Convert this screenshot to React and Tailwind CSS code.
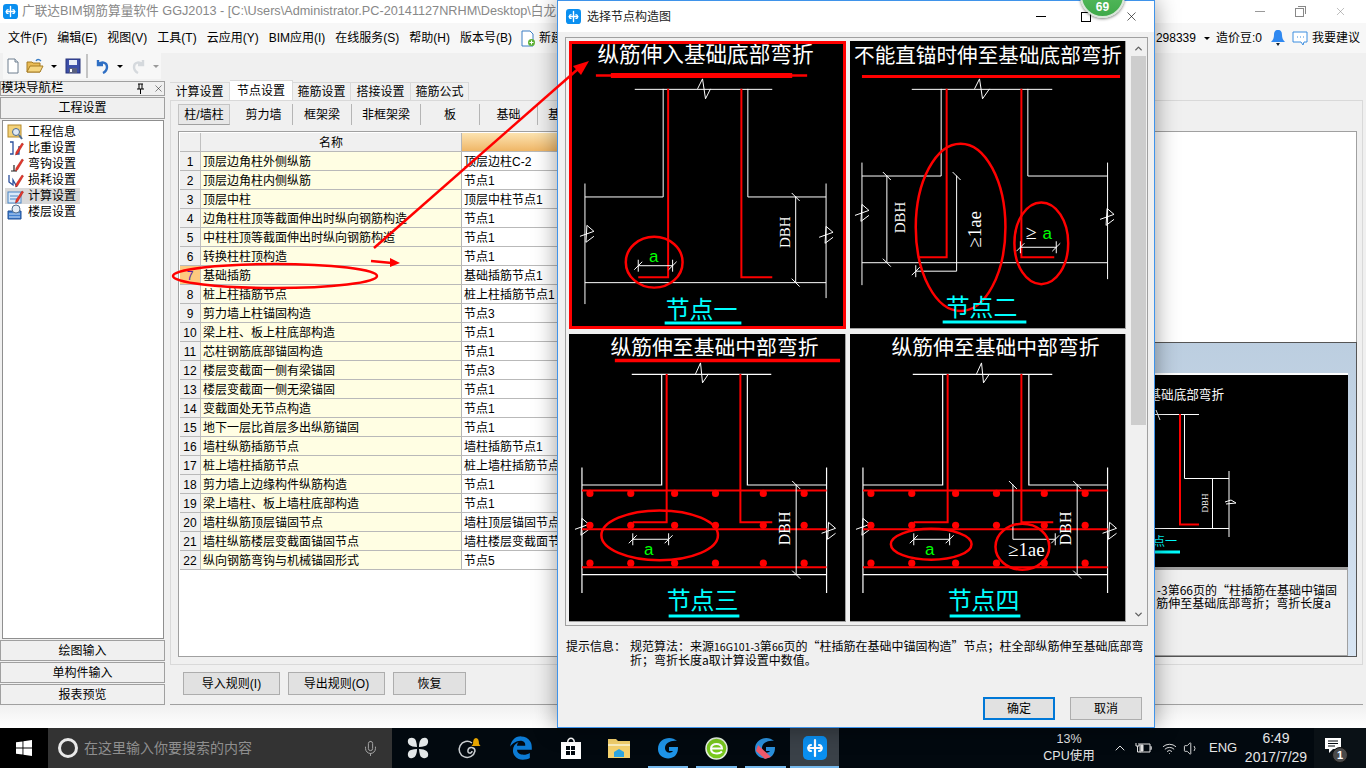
import { ChevronUp, Mic, Volume1, Wifi, X } from 'lucide-react';
import { FaEdgeLegacy } from 'react-icons/fa';

const menus = ['文件(F)', '编辑(E)', '视图(V)', '工具(T)', '云应用(Y)', 'BIM应用(I)', '在线服务(S)', '帮助(H)', '版本号(B)'];

const mainTabs = [
  ['计算设置', 'w-[60px]'],
  ['节点设置', 'w-[63px]'],
  ['箍筋设置', 'w-[58px]'],
  ['搭接设置', 'w-[60px]'],
  ['箍筋公式', 'w-[58px]'],
];

const subTabs = [
  ['剪力墙', 'w-[58px]'],
  ['框架梁', 'w-[59px]'],
  ['非框架梁', 'w-[69px]'],
  ['板', 'w-[59px]'],
  ['基础', 'w-[58px]'],
  ['基础主梁', 'w-[69px]'],
];

const rows = [
  ['顶层边角柱外侧纵筋', '顶层边柱C-2'],
  ['顶层边角柱内侧纵筋', '节点1'],
  ['顶层中柱', '顶层中柱节点1'],
  ['边角柱柱顶等截面伸出时纵向钢筋构造', '节点1'],
  ['中柱柱顶等截面伸出时纵向钢筋构造', '节点1'],
  ['转换柱柱顶构造', '节点1'],
  ['基础插筋', '基础插筋节点1'],
  ['桩上柱插筋节点', '桩上柱插筋节点1'],
  ['剪力墙上柱锚固构造', '节点3'],
  ['梁上柱、板上柱底部构造', '节点1'],
  ['芯柱钢筋底部锚固构造', '节点1'],
  ['楼层变截面一侧有梁锚固', '节点3'],
  ['楼层变截面一侧无梁锚固', '节点1'],
  ['变截面处无节点构造', '节点1'],
  ['地下一层比首层多出纵筋锚固', '节点1'],
  ['墙柱纵筋插筋节点', '墙柱插筋节点1'],
  ['桩上墙柱插筋节点', '桩上墙柱插筋节点1'],
  ['剪力墙上边缘构件纵筋构造', '节点1'],
  ['梁上墙柱、板上墙柱底部构造', '节点1'],
  ['墙柱纵筋顶层锚固节点', '墙柱顶层锚固节点1'],
  ['墙柱纵筋楼层变截面锚固节点', '墙柱楼层变截面节点1'],
  ['纵向钢筋弯钩与机械锚固形式', '节点5'],
];

const navItems = ['工程信息', '比重设置', '弯钩设置', '损耗设置', '计算设置', '楼层设置'];

function AppLogo({ size = 16 }) {
  return (
    <svg width={size} height={size} viewBox="0 0 24 24">
      <rect width="24" height="24" rx="5" fill="#0a8ff0" />
      <path d="M12 4v16M5 12h14M8 9c-3 0-4 6 0 6M16 9c3 0 4 6 0 6" stroke="#fff" strokeWidth="2.2" fill="none" strokeLinecap="round" />
    </svg>
  );
}

function NavIcon({ index }) {
  const pencil = <path d="M9 12 15 3l1.500 1L10.500 14l-2 1z" fill="#e8372c" stroke="#a01c12" strokeWidth=".5" />;
  return (
    <svg width="17" height="16" viewBox="0 0 17 16" className="shrink-0">
      {index === 0 && (
        <>
          <rect x="1" y="1" width="13" height="12" fill="#f3d27a" stroke="#b58a2a" />
          <circle cx="9" cy="8" r="3.5" fill="#dfe9f5" stroke="#4b6a8f" />
          <path d="m12 11 3 4" stroke="#4b6a8f" strokeWidth="2" />
        </>
      )}
      {index === 1 && (
        <>
          <path d="M3 2h3v12H3M12 6v8H9" stroke="#2a4f9c" strokeWidth="1.3" fill="none" />
          {pencil}
        </>
      )}
      {index === 2 && (
        <>
          <path d="M7 9v6M4 15h6" stroke="#222" strokeWidth="1.2" fill="none" />
          {pencil}
        </>
      )}
      {index === 3 && (
        <>
          <path d="M2 3v7l4 3V8l4 7" stroke="#2a4f9c" strokeWidth="1.3" fill="none" />
          {pencil}
        </>
      )}
      {index === 4 && (
        <>
          <rect x="1" y="4" width="13" height="11" fill="#d9e9f9" stroke="#4a86c5" />
          <path d="M3 8h8M3 11h7" stroke="#4a86c5" />
          {pencil}
        </>
      )}
      {index === 5 && (
        <>
          <path d="M1 7h13v8H1z" fill="#3f7fd0" stroke="#1f4f95" />
          <path d="M2 10h11M2 13h11" stroke="#cfe2f7" />
          <circle cx="9" cy="5" r="4" fill="#e5edf6" stroke="#54708f" />
        </>
      )}
    </svg>
  );
}

function ToolbarIcons() {
  return (
    <div className="flex items-center h-[26px] w-[158px] ml-[3px] bg-[#f7f7f7]">
      <svg width="16" height="16" viewBox="0 0 16 16" className="ml-[2px]">
        <path d="M3 1h7l3 3v11H3z" fill="#fff" stroke="#6f7f8f" />
        <path d="M10 1v3h3" fill="#dfe7ef" stroke="#6f7f8f" />
      </svg>
      <svg width="18" height="16" viewBox="0 0 18 16" className="ml-[5px]">
        <path d="M1 4h5l1 1h7v9H1z" fill="#e9bb55" stroke="#a67c25" />
        <path d="M1 14l3-6h13l-3 6z" fill="#f6d680" stroke="#a67c25" />
        <path d="M10 3c1-2 3-2 5 0" stroke="#3b7dc4" fill="none" strokeWidth="1.4" />
      </svg>
      <span className="ml-[7px] w-0 h-0 border-x-[3px] border-x-transparent border-t-[3px] border-t-black" />
      <svg width="16" height="16" viewBox="0 0 16 16" className="ml-[8px]">
        <rect x="1" y="1" width="14" height="14" fill="#3c4fa8" stroke="#26337a" />
        <rect x="4" y="2" width="8" height="5" fill="#e8edf7" />
        <rect x="4" y="10" width="8" height="5" fill="#59607f" />
        <rect x="5" y="11" width="2" height="3" fill="#fff" />
      </svg>
      <span className="ml-[5px] h-[24px] w-[2px] bg-[#c4c4c4]" />
      <svg width="15" height="16" viewBox="0 0 15 16" className="ml-[7px]">
        <path d="M3 2v5h5M3 7c3-4 9-3 9 2 0 3-2 5-4 6" stroke="#2f6fc4" strokeWidth="2.4" fill="none" />
      </svg>
      <span className="ml-[7px] w-0 h-0 border-x-[3px] border-x-transparent border-t-[3px] border-t-black" />
      <svg width="14" height="16" viewBox="0 0 14 16" className="ml-[8px]">
        <path d="M12 2v5H7M12 7C9 3 3 4 3 9c0 3 2 5 4 6" stroke="#d5d9dd" strokeWidth="2.4" fill="none" />
      </svg>
      <span className="ml-[8px] w-0 h-0 border-x-[3px] border-x-transparent border-t-[3px] border-t-[#9a9a9a]" />
    </div>
  );
}

function Ln({ d, w = 1, c = '#fff' }) {
  return <path d={d} stroke={c} strokeWidth={w} fill="none" />;
}

function Tick({ x, y }) {
  return <Ln d={`M${x - 4} ${y - 4}L${x + 4} ${y + 4}`} />;
}

// end mark of a horizontal dimension: upright bar and a slash
function HTick({ x, y }) {
  return <Ln d={`M${x} ${y - 6}V${y + 6}M${x - 4} ${y + 4}L${x + 4} ${y - 4}`} />;
}

function Brk({ x, y }) {
  // little zigzag break mark, x/y is the crossing point
  return <Ln d={`M${x - 7} ${y}L${x + 7} ${y - 5}L${x} ${y - 11}L${x - 1} ${y + 6}L${x + 7} ${y}`} />;
}

function Oval({ cx, cy, rx, ry }) {
  return <ellipse cx={cx} cy={cy} rx={rx} ry={ry} stroke="#ff0000" strokeWidth="2.5" fill="none" />;
}

function Txt({ x, y, size, color = '#fff', children, rotate, serif }) {
  return (
    <text
      x={x}
      y={y}
      fontSize={size}
      fill={color}
      textAnchor="middle"
      dominantBaseline="central"
      transform={rotate ? `rotate(${rotate} ${x} ${y})` : undefined}
      className={serif ? "font-['Liberation_Serif']" : undefined}
    >
      {children}
    </text>
  );
}

function Dots({ x0, y }) {
  return [0, 41, 85, 126, 174, 215].map((dx) => <circle key={dx} cx={x0 + dx} cy={y} r="3.6" fill="#ff0000" />);
}

function Frame({ box, children, selected }) {
  return (
    <div className={`relative bg-black border-b border-r border-[#a0a0a0] ${selected ? 'outline-[3px] -outline-offset-[3px] outline-[#ff0000]' : ''}`}>
      <svg viewBox={box} className="block w-full h-full">
        {children}
      </svg>
    </div>
  );
}

function Node1() {
  return (
    <Frame box="569 40 277 288" selected>
      <Txt x={706} y={54} size={21.7}>纵筋伸入基础底部弯折</Txt>
      <Ln d="M596 74.5H808" w={2.5} c="#f00" />
      <Ln d="M611 74.5H793" w={5} c="#f00" />
      <Ln d="M635 88.5H773M663.5 88V196.5H585M585 183V304M748.5 88V196.5H827M827 183V298M585 282.5H827" />
      <Ln d="M698 88L703 78L706 98L711 88" />
      <Brk x={587} y={236} />
      <Brk x={827} y={237} />
      <Ln d="M668.5 88V277H638.5" w={2} c="#f00" />
      <Ln d="M742 88V277H773" w={2} c="#f00" />
      <Ln d="M796.5 196V282" />
      <Tick x={796.5} y={196.5} />
      <Tick x={796.5} y={282.5} />
      <Txt x={786} y={232} size={15} rotate={-90} serif>DBH</Txt>
      <Ln d="M638.5 265.5H673" />
      <HTick x={638.5} y={265.5} />
      <HTick x={673} y={265.5} />
      <Txt x={654} y={256} size={17} color="#00ff00">a</Txt>
      <Oval cx={654.5} cy={262} rx={28.5} ry={25.5} />
      <Txt x={702} y={309} size={24} color="#00ffff">节点一</Txt>
      <rect x="665" y="321.5" width="77" height="3" fill="#00ffff" />
    </Frame>
  );
}

function Node2() {
  return (
    <Frame box="850 40 276 288">
      <Txt x={988.5} y={55} size={20.7}>不能直锚时伸至基础底部弯折</Txt>
      <Ln d="M862 75.5H1121" w={3} c="#f00" />
      <Ln d="M912 88.5H1053M941.5 88V175.5H862M862 162V285M1028.5 88V175.5H1108.5M1108.5 162V279M862 262.5H1108.5" />
      <Ln d="M975 88L980 78L983 98L990 88" />
      <Brk x={862} y={215} />
      <Brk x={1108} y={219} />
      <Ln d="M947 88V257H918" w={2} c="#f00" />
      <Ln d="M1022 88V257H1055" w={2} c="#f00" />
      <Ln d="M887 175V262M957 175V271H916" />
      <Tick x={887} y={175.5} />
      <Tick x={887} y={262.5} />
      <Tick x={957} y={175.5} />
      <HTick x={916} y={271} />
      <Txt x={900} y={217} size={15} rotate={-90} serif>DBH</Txt>
      <Txt x={975} y={229} size={19} rotate={-90} serif>≥1ae</Txt>
      <Ln d="M1021 247H1057" />
      <HTick x={1021} y={247} />
      <HTick x={1057} y={247} />
      <Txt x={1032} y={232} size={20} serif>≥</Txt>
      <Txt x={1048} y={233} size={17} color="#00ff00">a</Txt>
      <Oval cx={961} cy={227} rx={45} ry={84} />
      <Oval cx={1042} cy={243} rx={27} ry={41} />
      <Txt x={982} y={307} size={24} color="#00ffff">节点二</Txt>
      <rect x="943" y="320.5" width="84" height="3" fill="#00ffff" />
    </Frame>
  );
}

function Foundation({ x0, wallL, wallR, barL, barR, hookL, hookR, xEnd }) {
  // shared part of node 3 and node 4, same drawing shifted along x
  return (
    <>
      <Ln d={`M${x0 + 50} 373.5H${x0 + 190}M${wallL} 373V484.5H${x0}M${x0} 467V593M${wallR} 373V484.5H${xEnd}M${xEnd} 467V593M${x0} 574.5H${xEnd}`} w={1.2} />
      <Ln d={`M${x0 + 114} 373L${x0 + 119} 362L${x0 + 121} 382L${x0 + 127} 373`} />
      <Brk x={x0} y={529} />
      <Brk x={xEnd + 2} y={533} />
      {[490, 529, 567].map((y) => <Ln key={y} d={`M${x0} ${y}H${xEnd}`} w={2} c="#f00" />)}
      <Dots x0={x0 + 8} y={493} />
      <Dots x0={x0 + 8} y={525} />
      <Dots x0={x0 + 8} y={563} />
      <Ln d={`M${barL} 373V522H${hookL}`} w={2} c="#f00" />
      <Ln d={`M${barR} 373V522H${hookR}`} w={2} c="#f00" />
      <Ln d={`M${x0 + 215} 484V574`} />
      <Tick x={x0 + 215} y={484.5} />
      <Tick x={x0 + 215} y={574.5} />
    </>
  );
}

function Node3() {
  return (
    <Frame box="569 333 277 288">
      <Txt x={715} y={347} size={20.9}>纵筋伸至基础中部弯折</Txt>
      <Ln d="M615 359.5H841" w={3.5} c="#f00" />
      <Foundation x0={582} wallL={662} wallR={748} barL={667} barR={741} hookL={633} hookR={773} xEnd={827.5} />
      <Txt x={785} y={528} size={16} rotate={-90} serif>DBH</Txt>
      <Ln d="M633 539H669" />
      <HTick x={633} y={539} />
      <HTick x={669} y={539} />
      <Txt x={649} y={549} size={17} color="#00ff00">a</Txt>
      <Oval cx={660} cy={535} rx={58.5} ry={25} />
      <Txt x={703} y={600} size={24} color="#00ffff">节点三</Txt>
      <rect x="669" y="614.5" width="71" height="3" fill="#00ffff" />
    </Frame>
  );
}

function Node4() {
  return (
    <Frame box="850 333 276 288">
      <Txt x={996} y={347} size={20.9}>纵筋伸至基础中部弯折</Txt>
      <Foundation x0={863} wallL={943} wallR={1029.5} barL={948} barR={1022} hookL={914} hookR={1054} xEnd={1108.5} />
      <Txt x={1066} y={528} size={16} rotate={-90} serif>DBH</Txt>
      <Ln d="M1013.5 484V539H1056" />
      <Tick x={1013.5} y={484.5} />
      <HTick x={1056} y={539} />
      <Ln d="M914 539H950" />
      <HTick x={914} y={539} />
      <HTick x={950} y={539} />
      <Txt x={930} y={549} size={17} color="#00ff00">a</Txt>
      <Oval cx={931.5} cy={544} rx={40.5} ry={15.5} />
      <Txt x={1027} y={549} size={19} serif>≥1ae</Txt>
      <Oval cx={1023} cy={546.5} rx={27} ry={23} />
      <Txt x={984} y={600} size={24} color="#00ffff">节点四</Txt>
      <rect x="950" y="614.5" width="71" height="3" fill="#00ffff" />
    </Frame>
  );
}

function NodeDialog() {
  return (
    <div className="absolute left-[557px] top-0 w-[598px] h-[728px] flex flex-col bg-[#f0f0f0] border border-[#3f93ea] shadow-[0_0_22px_rgba(0,0,0,0.4)]">
      <div className="h-[31px] shrink-0 bg-white flex items-center pl-[8px] text-[12px] text-[#222]">
        <AppLogo size={15} />
        <span className="ml-[6px]">选择节点构造图</span>
        <div className="ml-auto flex items-center pr-[15px]">
          <span className="w-[10px] h-px bg-black" />
          <span className="ml-[35px] w-[10px] h-[10px] border border-black" />
          <X size={15} strokeWidth={1} className="ml-[33px] text-black" />
        </div>
      </div>

      <div className="mx-[7px] mt-[5px] h-[589px] w-[583px] border border-[#a0a0a0] flex bg-[#f0f0f0] pt-[3px] pl-[3px]">
        <div className="grid grid-cols-[277px_276px] grid-rows-[288px_288px] gap-x-[4px] gap-y-[5px]">
          <Node1 />
          <Node2 />
          <Node3 />
          <Node4 />
        </div>
        <div className="ml-[5px] mb-[3px] w-[15px] flex flex-col bg-[#f0f0f0]">
          <div className="h-[15px] flex items-center justify-center text-[#606060]">
            <ChevronUp size={11} strokeWidth={3} />
          </div>
          <div className="h-[369px] bg-[#cdcdcd]" />
          <div className="flex-1" />
          <div className="h-[15px] flex items-center justify-center text-[#606060] rotate-180">
            <ChevronUp size={11} strokeWidth={3} />
          </div>
        </div>
      </div>

      <div className="mt-[13px] ml-[8px] flex text-[12px] leading-[13px] text-black font-['Noto_Sans_CJK_SC',sans-serif]">
        <span className="w-[64px] shrink-0">提示信息：</span>
        <span className="whitespace-nowrap">
          规范算法：来源<span className="text-[10.500px]">16G101-3</span>第<span className="text-[10.500px]">66</span>页的“柱插筋在基础中锚固构造”节点；柱全部纵筋伸至基础底部弯
          <br />
          折；弯折长度a取计算设置中数值。
        </span>
      </div>

      <div className="mt-[31px] mr-[12px] flex justify-end gap-[15px] text-[12px]">
        <button className="w-[72px] h-[23px] border-2 border-[#0078d7] bg-[#e1e1e1]">确定</button>
        <button className="w-[72px] h-[23px] border border-[#adadad] bg-[#e1e1e1]">取消</button>
      </div>
    </div>
  );
}

function BehindDialog() {
  return (
    <div className="absolute left-[1155px] top-[342px] w-[202px] h-[315px] border-y border-r border-[#555] bg-gradient-to-b from-[#bccee0] to-[#d8e5f3] pt-[30px] pr-[8px] flex flex-col">
      <div className="h-[2px] bg-white" />
      <svg viewBox="1155 375 193 192" className="block w-full h-[192px] bg-black">
        <text x="1224" y="395" fontSize="12.6" fill="#fff" textAnchor="end" dominantBaseline="central">基础底部弯折</text>
        <Ln d="M1150 414.5H1199M1184.5 414V478.5H1229M1229 471V537M1150 528.5H1229M1212.5 478V528" />
        <Ln d="M1180 414V524.5H1199" w={2} c="#f00" />
        <Ln d="M1156 410L1160 420M1225 502L1231 500L1236 503L1226 504" />
        <Txt x={1205} y={503} size={9} rotate={-90} serif>DBH</Txt>
        <text x="1177" y="542" fontSize="12" fill="#00ffff" textAnchor="end" dominantBaseline="central">点一</text>
        <rect x="1155" y="550.5" width="25" height="3" fill="#00ffff" />
      </svg>
      <div className="flex-1 bg-[#f0f0f0] border-t-[3px] border-t-[#a0a0a0] border-r border-b border-r-[#a0a0a0] border-b-[#a0a0a0] pt-[13px] text-[12px] leading-[13px] text-black pr-[10px] overflow-hidden whitespace-nowrap flex flex-col items-end font-['Noto_Sans_CJK_SC',sans-serif]">
        <span>-3第66页的“柱插筋在基础中锚固</span>
        <span className="pr-[6px]">筋伸至基础底部弯折；弯折长度a</span>
      </div>
    </div>
  );
}

function RuleTable() {
  return (
    <div className="flex-1 min-h-0 border border-[#a0a0a0] bg-white pl-px pt-px overflow-hidden text-[12px] text-black">
      <div className="flex h-[18px] w-[502px]">
        <div className="w-[21px] bg-[#f0f0f0] border-r border-[#c0c0c0]" />
        <div className="w-[261px] bg-[#f0f0f0] border-r border-[#b5b5b5] text-center leading-[20px]">名称</div>
        <div className="w-[220px] bg-gradient-to-b from-[#fce3b0] to-[#efb666]" />
      </div>
      {rows.map(([name, value], i) => (
        <div key={name} className="flex w-[502px] h-[19px] border-t border-[#b9b9b9] leading-[20px]">
          <div className={`w-[21px] text-center border-r border-[#c0c0c0] ${i === 6 ? 'bg-[#fdc97f] text-[#5a1fa0]' : 'bg-[#f0f0f0]'}`}>{i + 1}</div>
          <div className="w-[261px] pl-[2px] bg-[#fffee3] border-r border-[#b5b5b5] whitespace-nowrap">{name}</div>
          <div className="w-[220px] pl-[2px] whitespace-nowrap">{value}</div>
        </div>
      ))}
      <div className="border-t border-[#b9b9b9] w-[502px]" />
    </div>
  );
}

function TaskIcon({ children, line, active, cls }) {
  return (
    <div className={`relative h-full flex items-center justify-center ${cls} ${active ? 'bg-[#3a4148]' : ''}`}>
      {children}
      {line && <span className={`absolute bottom-0 h-[2px] bg-[#76b9ed] ${active ? 'left-0 right-0' : 'left-[4px] right-[4px]'}`} />}
    </div>
  );
}

function Taskbar() {
  return (
    <div className="h-[40px] shrink-0 flex bg-[#02090f] text-white">
      <div className="w-[48px] bg-black flex items-center justify-center">
        <svg width="16" height="16" viewBox="0 0 16 16" fill="#fff">
          <path d="M0 2.3 6.5 1.4v6.2H0zM7.4 1.3 16 0v7.6H7.4zM0 8.4h6.5v6.2L0 13.7zM7.4 8.4H16V16l-8.6-1.2z" />
        </svg>
      </div>
      <div className="w-[344px] bg-[#333333] flex items-center pl-[10px] pr-[13px] text-[14px] text-[#8f8f8f]">
        <span className="w-[20px] h-[20px] rounded-full border-[3px] border-[#e8e8e8]" />
        <span className="ml-[6px]">在这里输入你要搜索的内容</span>
        <Mic size={17} strokeWidth={1.4} className="ml-auto text-[#a5a5a5]" />
      </div>

      <TaskIcon cls="w-[52px]">
        <svg width="24" height="24" viewBox="0 0 24 24" fill="#e3e7e8">
          <path d="M11 11C4 11 1 8 2 4c1-3 7-3 8 1 .5 2 1 4 1 6zM13 11c0-7 3-10 7-9 3 1 3 7-1 8-2 .5-4 1-6 1zM13 13c7 0 10 3 9 7-1 3-7 3-8-1-.5-2-1-4-1-6zM11 13c0 7-3 10-7 9-3-1-3-7 1-8 2-.5 4-1 6-1z" />
        </svg>
      </TaskIcon>
      <TaskIcon cls="w-[49px]">
        <svg width="26" height="26" viewBox="0 0 26 26">
          <path d="M16 8a8 8 0 1 0 3 8c0-4-6-5-7-1s4 4 4 1" stroke="#c9cdd0" strokeWidth="1.5" fill="none" />
          <path d="M17 9c0-4 1-6 3-6s3 2 3 6l1.500 2H15.500z" fill="#e6a400" />
        </svg>
      </TaskIcon>
      <TaskIcon cls="w-[56px]">
        <FaEdgeLegacy size={24} className="text-[#0c7bd4]" />
      </TaskIcon>
      <TaskIcon cls="w-[44px]">
        <svg width="22" height="24" viewBox="0 0 22 24" fill="#fff">
          <path d="M1 6h20v17H1zM7 6c0-6 8-6 8 0h-1.500c0-4-5-4-5 0z" />
          <path d="M6 10h4v4H6zM11 10h4v4h-4zM6 15h4v4H6zM11 15h4v4h-4z" fill="#02090f" />
        </svg>
      </TaskIcon>
      <TaskIcon cls="w-[51px]">
        <svg width="22" height="20" viewBox="0 0 22 20">
          <path d="M0 1h8l2 2h12v17H0z" fill="#f5d26e" />
          <path d="M0 6h22v2H0z" fill="#fdf0c0" />
          <path d="M6 19v-5l5-3 5 3v5z" fill="#2fa6e0" />
        </svg>
      </TaskIcon>
      <TaskIcon line cls="w-[48px]">
        <svg width="25" height="25" viewBox="0 0 25 25">
          <path d="M21 5C15-1 2 2 2 13c0 9 11 12 17 7 3-3 3-7 3-9h-9v4h4c-2 3-8 2-8-3 0-5 6-8 12-7z" fill="#1e94e8" />
        </svg>
      </TaskIcon>
      <TaskIcon line cls="w-[49px]">
        <svg width="23" height="23" viewBox="0 0 23 23">
          <circle cx="11.500" cy="11.500" r="10.500" fill="#79c81e" stroke="#e5efe0" strokeWidth="1.500" />
          <path d="M6 11.500h11c0-6-11-6-11 0 0 6 8 6 11 3" stroke="#fff" strokeWidth="2" fill="none" />
        </svg>
      </TaskIcon>
      <TaskIcon line cls="w-[49px]">
        <svg width="25" height="25" viewBox="0 0 25 25">
          <path d="M21 5C15-1 2 2 2 13c0 9 11 12 17 7 3-3 3-7 3-9h-9v4h4c-2 3-8 2-8-3 0-5 6-8 12-7z" fill="#2a90dc" />
          <path d="M3 15 12 23l6-2-13-12z" fill="#ef5a6a" />
        </svg>
      </TaskIcon>
      <TaskIcon line active cls="w-[49px]">
        <AppLogo size={24} />
      </TaskIcon>

      <div className="flex-1" />

      <div className="w-[60px] flex flex-col items-center justify-center text-[12.500px] leading-[17px] text-[#e6e6e6]">
        <span>13%</span>
        <span>CPU使用</span>
      </div>
      <div className="flex items-center text-[#e6e6e6]">
        <ChevronUp size={16} strokeWidth={1.5} className="ml-[13px]" />
        <svg width="17" height="12" viewBox="0 0 17 12" fill="none" stroke="#e6e6e6" className="ml-[7px]">
          <path d="M5 2h10v8H5z" />
          <path d="M15 5h2v2h-2M1 1v3h3V1M2.500 4v6h3" />
          <path d="M6 3h2v6H6z" fill="#e6e6e6" />
        </svg>
        <Wifi size={15} strokeWidth={1.5} className="ml-[10px]" />
        <Volume1 size={17} strokeWidth={1.3} className="ml-[6px]" />
      </div>
      <div className="ml-[9px] w-[29px] flex items-center text-[13px] text-[#e6e6e6]">ENG</div>
      <div className="w-[76px] flex flex-col items-center justify-center text-[14px] leading-[19px] text-[#e6e6e6]">
        <span>6:49</span>
        <span>2017/7/29</span>
      </div>
      <div className="w-[52px] relative flex items-center pb-[6px] pl-[11px] bg-[#0a1116]">
        <svg width="16" height="15" viewBox="0 0 16 15">
          <path d="M0 0h16v11H8l-4 4v-4H0z" fill="#fff" />
          <path d="M3 3h10M3 5.500h10M3 8h7" stroke="#02090f" />
        </svg>
        <span className="absolute left-[18px] bottom-[5px] w-[16px] h-[16px] rounded-full bg-[#4a4a4a] border border-[#111] text-[11px] font-bold leading-[14px] text-center">1</span>
      </div>
    </div>
  );
}

export default function App() {
  return (
    <div lang="zh-CN" className="relative w-[1366px] h-[768px] overflow-hidden flex flex-col bg-[#f0f0f0] font-['Liberation_Sans','Noto_Sans_CJK_SC',sans-serif] text-[12px] text-black">
      {/* title bar */}
      <div className="h-[23px] shrink-0 bg-white flex items-center pl-[3px] text-[#888] text-[12.700px] whitespace-nowrap">
        <AppLogo size={15} />
        <span className="ml-[4px]">广联达BIM钢筋算量软件 GGJ2013 - [C:\Users\Administrator.PC-20141127NRHM\Desktop\白龙</span>
        <div className="ml-auto flex items-center gap-[30px] pr-[19px]">
          <span className="w-[10px] h-px bg-[#999]" />
          <span className="relative w-[9px] h-[9px] border border-[#888] mt-[2px] after:absolute after:-top-[3px] after:-right-[3px] after:w-[8px] after:h-[8px] after:border-t after:border-r after:border-[#888]" />
          <X size={13} strokeWidth={1} className="text-[#888]" />
        </div>
      </div>

      {/* menu bar */}
      <div className="h-[30px] shrink-0 bg-[#f7f7f7] flex items-center pl-[8px] whitespace-nowrap">
        <div className="flex gap-[10px]">
          {menus.map((m) => <span key={m}>{m}</span>)}
        </div>
        <svg width="15" height="17" viewBox="0 0 15 17" className="ml-[9px]">
          <path d="M1 1h8l3 3v12H1z" fill="#fff" stroke="#3d7fc4" />
          <circle cx="10.500" cy="12.500" r="3.500" fill="#5fb236" />
          <path d="M8.500 12.500h4M10.500 10.500v4" stroke="#fff" />
        </svg>
        <span className="ml-[3px]">新建</span>
        <div className="ml-auto flex items-center pr-[6px]">
          <span>298339</span>
          <span className="ml-[8px] w-0 h-0 border-x-[3px] border-x-transparent border-t-[3px] border-t-black" />
          <span className="ml-[6px]">造价豆:0</span>
          <svg width="14" height="16" viewBox="0 0 14 16" className="ml-[9px]">
            <path d="M7 0c3 0 4 2 4 5 0 3 1 5 3 7H0c2-2 3-4 3-7 0-3 1-5 4-5z" fill="#2f88f0" />
            <path d="M5 13h4l-2 3z" fill="#123" />
          </svg>
          <svg width="16" height="15" viewBox="0 0 16 15" className="ml-[7px]">
            <path d="M1 1h14v10h-3l-1 3-2-3H1z" fill="#fff" stroke="#3d8ee0" />
            <path d="M5 6h1M8 6h1M11 6h1" stroke="#3d8ee0" />
          </svg>
          <span className="ml-[4px]">我要建议</span>
        </div>
      </div>

      <div className="h-[28px] shrink-0">
        <ToolbarIcons />
      </div>

      {/* main area */}
      <div className="h-[624px] shrink-0 flex">
        {/* navigation panel */}
        <div className="w-[165px] shrink-0 flex flex-col">
          <div className="h-[15px] border border-[#a0a0a0] flex items-center text-[12.500px] leading-none">
            <span>模块导航栏</span>
            <svg width="9" height="11" viewBox="0 0 9 11" className="ml-[72px]">
              <path d="M2 1h5M3 1v5M6 1v5M1 6h7M4.500 6v5" stroke="#000" />
            </svg>
            <X size={11} strokeWidth={1} className="ml-[8px]" />
          </div>
          <div className="mt-px h-[22px] border border-[#a0a0a0] bg-[#f0f0f0] flex items-center justify-center">工程设置</div>
          <div className="mt-px flex-1 ml-[2px] mr-px border border-[#8f8f8f] bg-white pt-[3px] pl-[2px]">
            {navItems.map((item, i) => (
              <div key={item} className={`h-[16px] w-[75px] flex items-center pl-[2px] ${i === 4 ? 'bg-[#d9d9d9]' : ''}`}>
                <NavIcon index={i} />
                <span className="ml-[4px] whitespace-nowrap">{item}</span>
              </div>
            ))}
          </div>
          {['绘图输入', '单构件输入', '报表预览'].map((b) => (
            <div key={b} className="mt-px h-[21px] shrink-0 border border-[#a0a0a0] bg-[#f0f0f0] flex items-center justify-center">{b}</div>
          ))}
        </div>

        {/* settings pane */}
        <div className="ml-[5px] w-[1193px] flex flex-col">
          <div className="h-[19px] shrink-0 flex items-end">
            {mainTabs.map(([t, w], i) => (
              <div key={t} className={`${w} flex items-center justify-center border-r border-[#d9d9d9] ${i === 1 ? 'h-[20px] bg-white border-t' : 'h-[18px] bg-[#f0f0f0] border-t'} border-t-[#d9d9d9]`}>{t}</div>
            ))}
          </div>
          <div className="h-[565px] shrink-0 border border-[#d9d9d9] flex flex-col pt-[3px] pl-[7px] pr-[5px] pb-[7px]">
            <div className="h-[21px] shrink-0 flex items-center">
              <div className="w-[52px] h-full border border-[#c4c4c4] border-b-[#a0a0a0] bg-[#e8e8e8] flex items-center justify-center">柱/墙柱</div>
              <div className="w-[5px]" />
              {subTabs.map(([t, w]) => (
                <div key={t} className={`${w} h-[21px] border-r border-[#b5b5b5] flex items-center justify-center whitespace-nowrap`}>{t}</div>
              ))}
            </div>
            <div className="mt-[6px] flex-1 min-h-0 flex">
              <RuleTable />
            </div>
          </div>
          <div className="flex-1 border-b border-[#a0a0a0] flex items-start pt-[7px] pl-[13px] gap-[8px]">
            <button className="w-[97px] h-[23px] border border-[#adadad] bg-[#e1e1e1]">导入规则(I)</button>
            <button className="w-[97px] h-[23px] border border-[#adadad] bg-[#e1e1e1]">导出规则(O)</button>
            <button className="w-[73px] h-[23px] border border-[#adadad] bg-[#e1e1e1]">恢复</button>
          </div>
        </div>
      </div>

      <div className="flex-1 bg-gradient-to-b from-[#f0f0f0] to-white" />
      <Taskbar />

      <BehindDialog />
      <NodeDialog />

      {/* hand drawn red notes on top of the screenshot */}
      <svg className="absolute left-0 top-0 pointer-events-none" width="1366" height="728" fill="none">
        <ellipse cx="275" cy="276" rx="102" ry="12" stroke="#ff0000" strokeWidth="2.5" />
        <path d="M374 248 578 69" stroke="#ff0000" strokeWidth="2.5" />
        <path d="M589 61 581 75 573 66z" fill="#ff0000" />
        <path d="M371 261 392 263" stroke="#ff0000" strokeWidth="2.5" />
        <path d="M400 263 390 258 390 267z" fill="#ff0000" />
      </svg>

      {/* notification badge poking out of the top */}
      <div className="absolute left-[1080px] -top-[27px] w-[45px] h-[45px] rounded-full bg-gradient-to-b from-[#63c76a] to-[#3fa94a] border-2 border-[#d9e6da] shadow-[0_1px_3px_rgba(0,0,0,0.5)] flex items-end justify-center pb-[2px] text-white font-bold text-[12px] leading-[14px]">69</div>
    </div>
  );
}
